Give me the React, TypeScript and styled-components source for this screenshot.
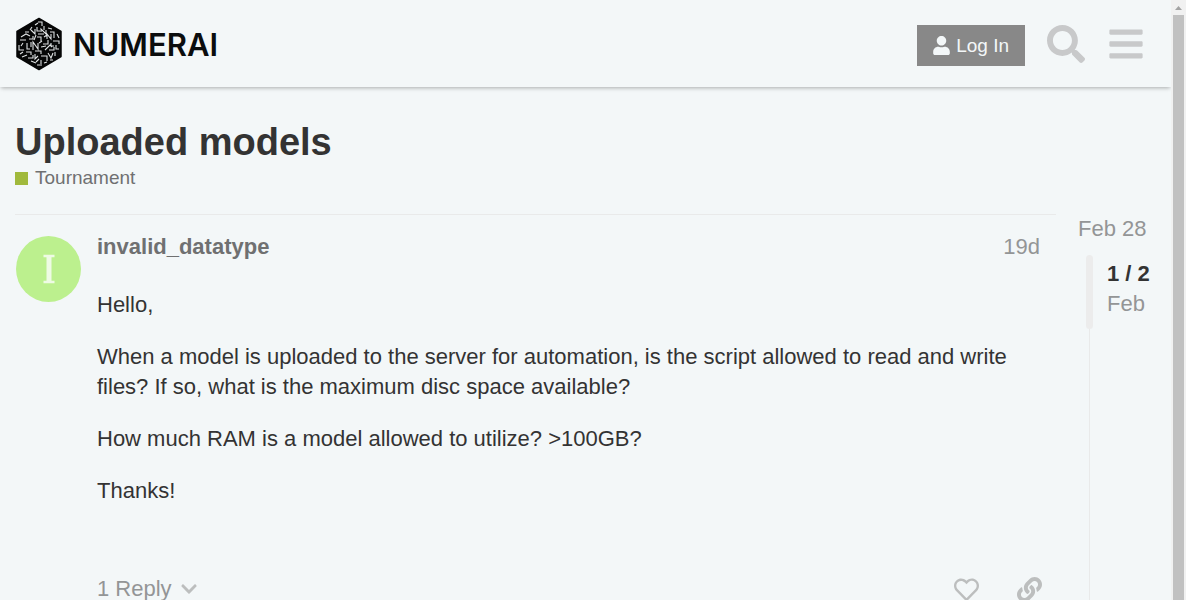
import React from "react";
import styled, { createGlobalStyle } from "styled-components";
import { FaUser, FaSearch, FaBars, FaChevronDown, FaRegHeart, FaLink } from "react-icons/fa";

const GlobalStyle = createGlobalStyle`
  *, *::before, *::after { box-sizing: border-box; }
  body {
    margin: 0;
    overflow: hidden;
    background: #f3f7f8;
    color: #333;
    font-family: "Liberation Sans", Arial, sans-serif;
    font-size: 22px;
    line-height: 30px;
  }
  button { font: inherit; border: 0; padding: 0; background: none; color: inherit; cursor: pointer; }
  a { color: inherit; text-decoration: none; }
  h1, p { margin: 0; }
  svg { display: block; }
`;

const Viewport = styled.div`
  display: flex;
  height: 100vh;
`;

const Page = styled.div`
  flex: 1;
  min-width: 0;
  overflow: hidden;
`;

const Scrollbar = styled.div`
  display: flex;
  flex-direction: column;
  width: 15px;
  padding: 0 2px;
  background: #f1f1f1;
`;

const ScrollArrow = styled.svg`
  width: 11px;
  height: 15px;
  fill: #a3a3a3;
`;

const ScrollThumb = styled.div`
  flex: 1;
  background: #c1c1c1;
`;

const Header = styled.header`
  display: flex;
  align-items: center;
  justify-content: space-between;
  height: 87px;
  padding: 0 26px 0 15px;
  box-shadow: 0 2px 4px -1px rgba(0, 0, 0, 0.3);
`;

const Logo = styled.a`
  display: flex;
  align-items: center;
  gap: 10px;
  color: #0b0d0e;
`;

const Wordmark = styled.span`
  padding-top: 3px;
  font-family: Inter, "Liberation Sans", sans-serif;
  font-size: 31px;
  font-weight: 600;
`;

const HeaderActions = styled.div`
  display: flex;
  align-items: center;
  color: #c8c9ca;
`;

const LoginButton = styled.button`
  display: flex;
  align-items: center;
  gap: 5px;
  height: 41px;
  margin: 4px 22px 0 0;
  padding: 0 16px 0 15px;
  background: #888;
  color: #f3f7f8;
  font-size: 19px;
`;

const IconButton = styled.button<{ $gap?: number }>`
  display: flex;
  margin-right: ${({ $gap = 0 }) => $gap}px;
`;

const Main = styled.main`
  padding: 35px 15px 0;
`;

const Title = styled.h1`
  font-size: 38px;
  line-height: 40px;
`;

const Category = styled.a`
  display: flex;
  align-items: center;
  gap: 7px;
  color: #6f7071;
  font-size: 19px;
  line-height: 32px;

  &::before {
    content: "";
    width: 13px;
    height: 13px;
    background: #a0b93c;
  }
`;

const Topic = styled.div`
  display: flex;
  gap: 22px;
  margin-top: 20px;
`;

const Post = styled.article`
  display: flex;
  flex: 1;
  gap: 16px;
  min-width: 0;
  padding: 17px 14px 0 1px;
  border-top: 1px solid #e9eaea;
`;

const Avatar = styled.a`
  display: flex;
  flex: none;
  align-items: center;
  justify-content: center;
  width: 65px;
  height: 66px;
  margin-top: 4px;
  border-radius: 50%;
  background: #bcf08e;
  color: #eefbe4;
`;

const PostBody = styled.div`
  flex: 1;
  min-width: 0;
`;

const PostMeta = styled.div`
  display: flex;
  justify-content: space-between;
  padding-right: 2px;
  color: #6f7071;
`;

const Author = styled.a`
  font-weight: 700;
`;

const Age = styled.a`
  color: #939596;
`;

const Cooked = styled.div`
  display: flex;
  flex-direction: column;
  gap: 22px;
  padding: 28px 15px 0 0;
`;

const PostControls = styled.nav`
  display: flex;
  align-items: center;
  justify-content: space-between;
  margin-top: 68px;
  color: #bcbebe;
`;

const RepliesButton = styled.button`
  display: flex;
  align-items: center;
  gap: 8px;

  span { color: #939596; }
`;

const PostActions = styled.div`
  display: flex;
  align-items: center;
  gap: 38px;
`;

const Timeline = styled.aside`
  width: 78px;
  color: #939596;
`;

const TimelineTrack = styled.div`
  height: 600px;
  margin: 11px 0 0 11px;
  border-left: 1px solid #e9eaea;
`;

const TimelineScroller = styled.div`
  display: flex;
  gap: 14px;
  height: 74px;
  margin-left: -4px;

  &::before {
    content: "";
    width: 7px;
    border-radius: 4px;
    background: #ececec;
  }
`;

const TimelinePosition = styled.div`
  padding-top: 4px;

  strong { display: block; color: #333; }
`;

function LogoMark() {
  return (
    <svg width="48" height="54" viewBox="0 0 48 54" aria-hidden="true">
      <path d="M24 1.5 46 14.5V39.5L24 52.5 2 39.5V14.5Z" fill="#060707" stroke="#060707" strokeWidth="1.5" strokeLinejoin="round" />
      <path
        d="M23 5h4v4M20 8l3-2M17 10l-2 3M29 9v4M22 10v4h3M16 13l4 4v-5M26 15v-3l5 5v-4M33 11l4 1M35 15h4v3M10 15h4M6 20l5-3 4 2M5 23h6M14 22h4v-3M21 18l-2 5M23 17h6M22 20h4v4M29 20l3-2M32 22v-5l4 5v-5M39 16v5M42 17l2 4M38 24h6v3M41 28v4h3M16 25v5M12 26v6h3M8 26l-2 3M4 28v5h5M18 33v-8l5 7v-6M24 26l3-2M28 27h5v-4M26 30l5-1M30 33l5-5 2 2M36 26v3h3M34 33h5v-3M20 34h6v3M11 35h5v3M5 37l3-2M7 40l5-2M13 41h5v-3M20 37v5l3-3M26 39h6v5M33 36l3 5 2-5M40 35v4M24 42l-3 3M16 44l5 2M26 43v4M22 48h5M29 46l3-1M35 43h3"
        fill="none"
        stroke="#dfe2e3"
        strokeWidth="1.1"
      />
    </svg>
  );
}

function AvatarInitial() {
  return (
    <svg width="12" height="32" viewBox="0 0 12 32" role="img" aria-label="invalid_datatype">
      <path d="M.5 3H11.5M.5 29H11.5" fill="none" stroke="currentColor" strokeWidth="2.6" />
      <path d="M6 2V30" stroke="currentColor" strokeWidth="5" />
    </svg>
  );
}

const paragraphs = [
  "Hello,",
  "When a model is uploaded to the server for automation, is the script allowed to read and write files? If so, what is the maximum disc space available?",
  "How much RAM is a model allowed to utilize? >100GB?",
  "Thanks!",
];

export default function App() {
  return (
    <Viewport>
      <GlobalStyle />
      <Page>
        <Header>
          <Logo href="#home">
            <LogoMark />
            <Wordmark>NUMERAI</Wordmark>
          </Logo>
          <HeaderActions>
            <LoginButton>
              <FaUser size={19} />
              Log In
            </LoginButton>
            <IconButton $gap={22} aria-label="Search">
              <FaSearch size={38} />
            </IconButton>
            <IconButton aria-label="Menu">
              <FaBars size={38} />
            </IconButton>
          </HeaderActions>
        </Header>
        <Main>
          <Title>Uploaded models</Title>
          <Category href="#tournament">Tournament</Category>
          <Topic>
            <Post>
              <Avatar href="#user">
                <AvatarInitial />
              </Avatar>
              <PostBody>
                <PostMeta>
                  <Author href="#user">invalid_datatype</Author>
                  <Age href="#post-1">19d</Age>
                </PostMeta>
                <Cooked>
                  {paragraphs.map((text) => (
                    <p key={text}>{text}</p>
                  ))}
                </Cooked>
                <PostControls>
                  <RepliesButton>
                    <span>1 Reply</span>
                    <FaChevronDown size={18} />
                  </RepliesButton>
                  <PostActions>
                    <IconButton aria-label="Like">
                      <FaRegHeart size={25} />
                    </IconButton>
                    <IconButton aria-label="Copy link">
                      <FaLink size={25} />
                    </IconButton>
                  </PostActions>
                </PostControls>
              </PostBody>
            </Post>
            <Timeline>
              <a href="#post-1">Feb 28</a>
              <TimelineTrack>
                <TimelineScroller>
                  <TimelinePosition>
                    <strong>1 / 2</strong>
                    Feb
                  </TimelinePosition>
                </TimelineScroller>
              </TimelineTrack>
            </Timeline>
          </Topic>
        </Main>
      </Page>
      <Scrollbar aria-hidden="true">
        <ScrollArrow viewBox="0 0 11 15">
          <path d="M2 10 5.5 6 9 10Z" />
        </ScrollArrow>
        <ScrollThumb />
      </Scrollbar>
    </Viewport>
  );
}
